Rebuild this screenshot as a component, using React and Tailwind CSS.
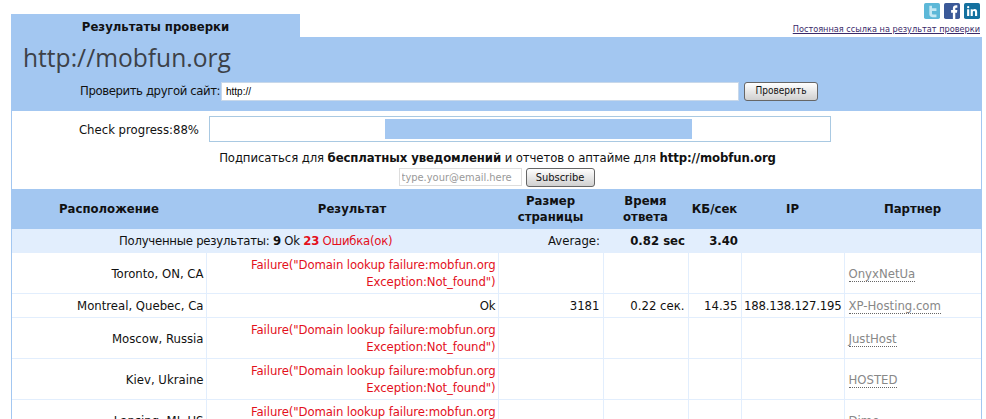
const rows = [
  { place: 'Toronto, ON, CA', fail: true, partner: 'OnyxNetUa', h: 'h-[40px]' },
  { place: 'Montreal, Quebec, Ca', size: '3181', time: '0.22 сек.', speed: '14.35', ip: '188.138.127.195', partner: 'XP-Hosting.com', h: 'h-[24px]' },
  { place: 'Moscow, Russia', fail: true, partner: 'JustHost', h: 'h-[41px]' },
  { place: 'Kiev, Ukraine', fail: true, partner: 'HOSTED', h: 'h-[41px]' },
  { place: 'Lansing, MI, US', fail: true, partner: 'Dime', h: 'h-[41px]' },
];

function Social() {
  return (
    <div className="flex justify-end gap-[4px] pr-[6px] h-[24px] pt-[3px]">
      <svg width="16" height="16" viewBox="0 0 18 18">
        <rect width="18" height="18" rx="2" fill="#5cb8d8" />
        <path d="M6 3h3v3h5v3H9v2.500c0 1 .5 1.500 1.500 1.500H14v3h-4.500C7 16 6 14.500 6 12.500z" fill="#c4e8f4" />
      </svg>
      <svg width="16" height="16" viewBox="0 0 18 18">
        <rect width="18" height="18" rx="2" fill="#3b5998" />
        <path d="M10 18v-7H8V8h2V6c0-2.500 1.500-3.500 3.500-3.500H15v2.800h-1c-1 0-1.300.4-1.300 1.200v1.500H15l-.4 3h-1.900v7z" fill="#fff" />
      </svg>
      <svg width="16" height="16" viewBox="0 0 18 18">
        <rect width="18" height="18" rx="2" fill="#14719f" />
        <path d="M3.500 7h2.400v7.500H3.500zM3.400 4.700a1.300 1.300 0 1 1 2.600 0 1.300 1.300 0 0 1-2.600 0zM7.500 7h2.300v1c.5-.8 1.300-1.200 2.300-1.200 1.900 0 2.700 1.200 2.700 3.200v4.500h-2.400v-4c0-1-.3-1.600-1.200-1.600s-1.300.7-1.300 1.600v4H7.500z" fill="#fff" />
      </svg>
    </div>
  );
}

export default function App() {
  return (
    <div className="h-[419px] overflow-hidden bg-white text-[#111] text-[13px] font-['DejaVu_Sans_Condensed','DejaVu_Sans',sans-serif] [font-stretch:condensed]">
      <Social />
      <div className="flex justify-between items-start pl-[11px] pr-[6px] -mt-[10px] h-[23px]">
        <div className="w-[289px] h-[23px] bg-[#a3c7f1] text-center font-bold leading-[26px] text-[13px]">Результаты проверки</div>
        <a className="mt-[9px] text-[9.1px] leading-[12px] text-[#3a2a6a] underline">Постоянная ссылка на результат проверки</a>
      </div>
      <div className="ml-[11px] mr-[4px] border-l border-r border-[#a3c7f1]">
        <div className="h-[74px] bg-[#a3c7f1]">
          <div className="pl-[11px] h-[40px] text-[24.6px] leading-[41px] text-[#3c4148] font-['Open_Sans',sans-serif] [font-stretch:normal]">http://mobfun.org</div>
          <div className="flex items-center h-[28px]">
            <span className="ml-[68px] w-[141px] whitespace-nowrap tracking-[-0.4px]">Проверить другой сайт:</span>
            <input
              readOnly
              value="http://"
              className="w-[518px] h-[19px] bg-white pl-[4px] pr-[5px] text-[10px] text-black border border-[#c8d8ea] outline-none font-['Liberation_Sans',sans-serif]"
            />
            <button className="ml-[5px] w-[74px] h-[19px] rounded-[3px] border border-[#666] bg-gradient-to-b from-white to-[#d0d0d0] text-[10px] leading-none">Проверить</button>
          </div>
        </div>
        <div className="flex items-start pt-[5px] h-[39px]">
          <div className="w-[197px] h-[26px] leading-[28px] text-right pr-[10px]">Check progress:88%</div>
          <div className="w-[622px] h-[26px] border border-[#a9c9e2] px-[175px] py-[2px]">
            <div className="w-[307px] h-full bg-[#a3c7f1]" />
          </div>
        </div>
        <div className="text-center leading-[15px] h-[15px] pl-[2px] tracking-[-0.1px]">
          Подписаться для <b>бесплатных уведомлений</b> и отчетов о аптайме для <b>http://mobfun.org</b>
        </div>
        <div className="flex justify-center items-center gap-[4px] h-[24px]">
          <input
            readOnly
            placeholder="type.your@email.here"
            className="w-[123px] h-[18px] px-[2px] text-[11px] border border-[#ddd] outline-none placeholder:text-[#999]"
          />
          <button className="w-[69px] h-[19px] rounded-[3px] border border-[#666] bg-gradient-to-b from-white to-[#d0d0d0] text-[11px] leading-none">Subscribe</button>
        </div>
        <table className="w-full table-fixed border-collapse">
          <colgroup>
            <col className="w-[194px]" />
            <col className="w-[292px]" />
            <col className="w-[105px]" />
            <col className="w-[85px]" />
            <col className="w-[53px]" />
            <col className="w-[103px]" />
            <col />
          </colgroup>
          <thead>
            <tr className="h-[40px] bg-[#a3c7f1] font-bold leading-[16px]">
              <th>Расположение</th>
              <th>Результат</th>
              <th>Размер<br />страницы</th>
              <th>Время<br />ответа</th>
              <th>КБ/сек</th>
              <th>IP</th>
              <th>Партнер</th>
            </tr>
          </thead>
          <tbody>
            <tr className="h-[24px] bg-[#e2eefd]">
              <td colSpan={2} className="pl-[107px] tracking-[-0.25px]">
                Полученные результаты: <b>9</b> Ok <b className="text-[#e3101c]">23</b> <span className="text-[#e3101c]">Ошибка(ок)</span>
              </td>
              <td className="text-right pr-[3px]">Average:</td>
              <td className="text-right pr-[3px] font-bold">0.82 sec</td>
              <td className="text-right pr-[3px] font-bold">3.40</td>
              <td />
              <td />
            </tr>
            {rows.map((r) => (
              <tr key={r.place} className={`${r.h} border-b border-[#e2eefd]`}>
                <td className="text-right pr-[2px] pt-[2px] border-r border-[#e2eefd]">{r.place}</td>
                <td className={`text-right pr-[2px] pt-[1px] leading-[17px] tracking-[-0.1px] border-r border-[#e2eefd] ${r.fail ? 'text-[#e3101c]' : ''}`}>
                  {r.fail ? <>Failure("Domain lookup failure:mobfun.org<br />Exception:Not_found")</> : 'Ok'}
                </td>
                <td className="text-right pr-[3px] pt-[2px] border-r border-[#e2eefd]">{r.size}</td>
                <td className="text-right pr-[3px] pt-[2px] border-r border-[#e2eefd]">{r.time}</td>
                <td className="text-right pr-[3px] pt-[2px] border-r border-[#e2eefd]">{r.speed}</td>
                <td className="text-right pr-[2px] pt-[2px] tracking-[-0.2px] border-r border-[#e2eefd] whitespace-nowrap">{r.ip}</td>
                <td className="pl-[4px] pt-[2px]">
                  <span className="text-[#888] border-b border-dotted border-[#666]">{r.partner}</span>
                </td>
              </tr>
            ))}
          </tbody>
        </table>
      </div>
    </div>
  );
}
